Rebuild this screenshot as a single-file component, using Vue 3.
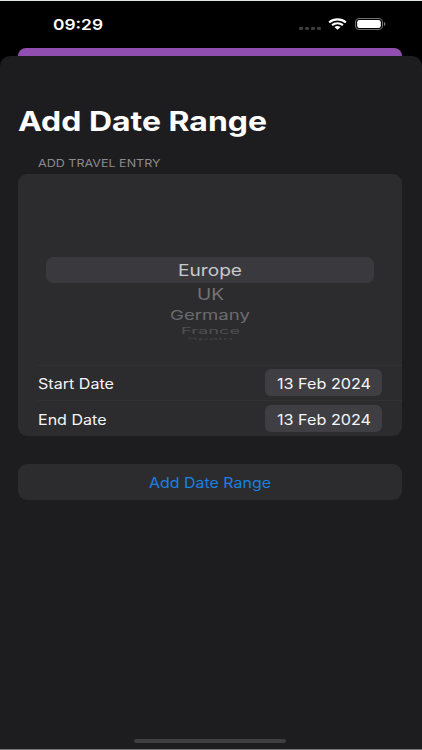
<script setup>
import { h } from 'vue'

// Text stretched to an exact width, with an optional vertical squash for the wheel rows.
const FitText = (props) =>
  h('svg', { width: props.width, height: props.height, class: 'fit', 'aria-label': props.text }, [
    h('text', {
      x: 0,
      y: 0,
      textLength: props.width,
      lengthAdjust: 'spacingAndGlyphs',
      transform: `translate(0 ${props.base}) scale(1 ${props.squash ?? 1})`,
      'font-size': props.size,
      fill: 'currentColor',
    }, props.text),
  ])
FitText.props = ['text', 'width', 'height', 'base', 'size', 'squash']

const wheel = [
  { name: 'UK', width: 27, height: 23, base: 16.8, squash: 1, color: '#747476' },
  { name: 'Germany', width: 80, height: 18, base: 13.6, squash: 0.84, color: '#6c6c6e' },
  { name: 'France', width: 59, height: 12, base: 9.6, squash: 0.54, color: '#505052' },
  { name: 'Spain', width: 46, height: 6, base: 4.4, squash: 0.22, color: '#404042' },
]
const dates = [
  { label: 'Start Date', width: 76, value: '13 Feb 2024' },
  { label: 'End Date', width: 68.5, value: '13 Feb 2024' },
]
</script>

<template>
  <div class="screen">
    <header class="status">
      <FitText class="time" text="09:29" :width="50" :height="20" :base="16" :size="15" />
      <div class="indicators">
        <div class="dots"><i v-for="n in 4" :key="n"></i></div>
        <svg class="wifi" width="19" height="12" viewBox="0 0 20 12">
          <g fill="none" stroke="#fff" stroke-width="2.2">
            <path d="M1.2 4.3C6.2 .1 13.8 .1 18.8 4.3" />
            <path d="M4.3 7.2C7.5 4.5 12.5 4.5 15.7 7.2" />
          </g>
          <path d="M6.7 9.1C8.6 7.6 11.4 7.6 13.3 9.1L10 12Z" fill="#fff" />
        </svg>
        <svg class="battery" width="31" height="12" viewBox="0 0 31 12">
          <rect x=".5" y=".5" width="27" height="11" rx="3.5" fill="none" stroke="#727272" />
          <rect x="2.2" y="2" width="23.6" height="8" rx="2.3" fill="#fff" />
          <path d="M29 4Q30.5 4.5 30.5 6T29 8Z" fill="#777" />
        </svg>
      </div>
    </header>
    <div class="behind"></div>
    <main class="sheet">
      <h1><FitText text="Add Date Range" :width="249" :height="34" :base="25.6" :size="26.7" /></h1>
      <h2><FitText text="ADD TRAVEL ENTRY" :width="122.5" :height="16" :base="12" :size="10.7" /></h2>
      <section class="card">
        <div class="picker">
          <div class="selected">
            <FitText text="Europe" :width="64" :height="26" :base="18.7" :size="16.2" />
          </div>
          <div v-for="row in wheel" :key="row.name" class="option" :style="{ color: row.color }">
            <FitText :text="row.name" :width="row.width" :height="row.height" :base="row.base" :size="16" :squash="row.squash" />
          </div>
        </div>
        <div v-for="d in dates" :key="d.label" class="row">
          <FitText :text="d.label" :width="d.width" :height="27" :base="19.6" :size="14.2" />
          <div class="pill">
            <FitText :text="d.value" :width="94" :height="27" :base="19.6" :size="14.2" />
          </div>
        </div>
      </section>
      <button class="submit">
        <FitText text="Add Date Range" :width="122" :height="36" :base="23.7" :size="14.2" />
      </button>
      <div class="home"></div>
    </main>
  </div>
</template>

<style>
body { margin: 0; background: #000; }
</style>

<style scoped>
.screen {
  box-sizing: border-box;
  width: 422px;
  height: 750px;
  display: flex;
  flex-direction: column;
  overflow: hidden;
  background: #000;
  border-top: 1px solid #dfe7e3;
  border-bottom: 1px solid #77777a;
  font-family: Inter, "Liberation Sans", sans-serif;
  color: #f5f5f7;
}
.fit { display: block; flex: none; overflow: visible; }
.status {
  height: 47px;
  flex: none;
  box-sizing: border-box;
  padding: 13px 36px 0 53px;
  display: flex;
  justify-content: space-between;
  align-items: flex-start;
}
.time { font-weight: 600; color: #fff; }
.indicators { display: flex; align-items: flex-start; padding-top: 4px; }
.dots { display: flex; gap: 2.4px; padding: 9px 7px 0 0; }
.dots i { width: 3.6px; height: 3px; border-radius: 1px; background: #3c3c3c; }
.wifi { margin-right: 8px; }
.behind {
  flex: none;
  height: 18px;
  margin: 0 20px 0 18px;
  border-radius: 8px 8px 0 0;
  background: #904eb1;
}
.sheet {
  flex: 1;
  margin-top: -10px;
  border-radius: 10px 10px 0 0;
  background: #1d1d1f;
  padding: 49px 20px 0 18px;
  display: flex;
  flex-direction: column;
}
h1, h2 { margin: 0; }
h1 { font-weight: 700; color: #fff; }
h2 { padding: 16px 0 0 20px; font-weight: 400; color: #8b8b90; }
.card {
  margin-top: 3px;
  height: 262px;
  border-radius: 9px;
  background: #2c2c2e;
  overflow: hidden;
}
.picker { height: 191px; box-sizing: border-box; padding-top: 83px; }
.selected {
  height: 26px;
  margin: 0 28px;
  border-radius: 7px;
  background: #3a3a3e;
  display: flex;
  justify-content: center;
  color: #c9c9cc;
}
.option { display: flex; justify-content: center; }
.row {
  height: 35px;
  box-sizing: border-box;
  margin-left: 20px;
  padding: 3px 20px 4px 0;
  border-top: 1px solid #323234;
  display: flex;
  justify-content: space-between;
}
.row + .row { height: 36px; padding-top: 4px; }
.pill {
  width: 117px;
  height: 27.4px;
  border-radius: 6px;
  background: #3e3e43;
  display: flex;
  justify-content: center;
}
.submit {
  margin: 28px 0 0;
  padding: 0;
  height: 36px;
  border: 0;
  border-radius: 9px;
  background: #2c2c2e;
  color: #1b7fe3;
  font: inherit;
  display: flex;
  justify-content: center;
}
.home {
  width: 152px;
  height: 4px;
  margin: auto auto 6px 116px;
  border-radius: 2px;
  background: #3e3e40;
}
</style>
